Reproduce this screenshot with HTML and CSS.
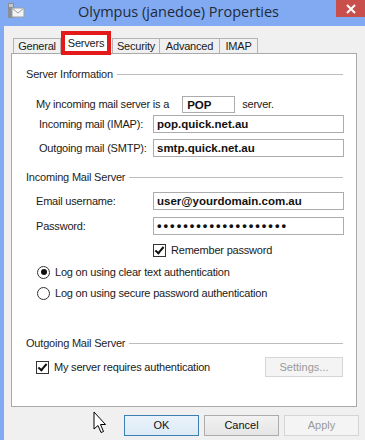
FILE: index.html
```html
<!DOCTYPE html>
<html lang="en">
<head>
    <meta charset="UTF-8">
    <title>Olympus (janedoe) Properties</title>
    <link rel="stylesheet" href="styles.css">
</head>
<body>

    <div class="window">
        <div class="titlebar">
            <svg class="app-icon" width="18" height="16" viewBox="0 0 18 16">
                <rect x="1" y="0" width="6" height="15" fill="#8a8f96"/>
                <rect x="2" y="1" width="4" height="3" fill="#c4c8cc"/>
                <rect x="5" y="5" width="12" height="9" fill="#f4f4f4" stroke="#9aa0a6"/>
                <path d="M5.5 5.5 L11 10 L16.5 5.5" fill="none" stroke="#9aa0a6"/>
            </svg>
            <div class="title">Olympus (janedoe) Properties</div>
            <div class="close">
                <svg width="10" height="10" viewBox="0 0 10 10">
                    <path d="M1 1 L9 9 M9 1 L1 9" stroke="white" stroke-width="2"/>
                </svg>
            </div>
        </div>

        <div class="client">
            <div class="tabs">
                <div class="tab tab-general">General</div>
                <div class="tab tab-servers active">Servers</div>
                <div class="tab tab-security">Security</div>
                <div class="tab tab-advanced">Advanced</div>
                <div class="tab tab-imap">IMAP</div>
            </div>

            <div class="panel">
                <div class="group-title first">
                    <span>Server Information</span>
                    <div class="rule"></div>
                </div>

                <div class="row row-pop">
                    <span class="label-inline">My incoming mail server is a</span>
                    <div class="box box-pop">POP</div>
                    <span>server.</span>
                </div>

                <div class="row row-imap">
                    <span class="label">Incoming mail (IMAP):</span>
                    <div class="box box-wide">pop.quick.net.au</div>
                </div>

                <div class="row row-smtp">
                    <span class="label">Outgoing mail (SMTP):</span>
                    <div class="box box-wide">smtp.quick.net.au</div>
                </div>

                <div class="group-title incoming">
                    <span>Incoming Mail Server</span>
                    <div class="rule"></div>
                </div>

                <div class="row row-email">
                    <span class="label label-short">Email username:</span>
                    <div class="box box-wide">user@yourdomain.com.au</div>
                </div>

                <div class="row row-password">
                    <span class="label label-short">Password:</span>
                    <div class="box box-wide dots">••••••••••••••••••••</div>
                </div>

                <div class="row row-remember">
                    <span class="check checked"></span>
                    <span>Remember password</span>
                </div>

                <div class="row row-radio1">
                    <span class="radio selected"></span>
                    <span>Log on using clear text authentication</span>
                </div>

                <div class="row row-radio2">
                    <span class="radio"></span>
                    <span>Log on using secure password authentication</span>
                </div>

                <div class="group-title outgoing">
                    <span>Outgoing Mail Server</span>
                    <div class="rule"></div>
                </div>

                <div class="row row-auth">
                    <span class="check checked"></span>
                    <span class="auth-text">My server requires authentication</span>
                    <div class="button disabled settings">Settings...</div>
                </div>
            </div>

            <div class="footer">
                <div class="button default">OK</div>
                <div class="button">Cancel</div>
                <div class="button disabled">Apply</div>
            </div>

            <svg class="cursor" width="14" height="23" viewBox="0 0 14 23">
                <path d="M1 1 L1 18 L5 14.5 L8 21.5 L10.5 20.5 L7.5 13.5 L12.5 13.5 Z" fill="white" stroke="black" stroke-width="1"/>
            </svg>
        </div>
    </div>

</body>
</html>
```

FILE: styles.css
```css
body {
    margin: 0;
    padding: 0;
    font-family: "Liberation Sans", Arial, sans-serif;
    font-size: 11px;
    letter-spacing: -0.2px;
    color: #1a1a1a;
}

.window {
    width: 365px;
    height: 440px;
    background: #82aaf2;
    display: flex;
    flex-direction: column;
    overflow: hidden;
}

.titlebar {
    height: 26px;
    display: flex;
    align-items: center;
}

.app-icon {
    margin-left: 7px;
    margin-top: -4px;
}

.title {
    flex: 1;
    text-align: center;
    font-family: "Open Sans", sans-serif;
    font-size: 14.5px;
    letter-spacing: 0;
    color: #1f2a38;
    margin-left: -4px;
    margin-top: -3px;
}

.close {
    width: 29px;
    height: 17px;
    align-self: flex-start;
    background: #c84f4b;
    display: flex;
    justify-content: center;
    align-items: center;
}

.client {
    flex: 1;
    margin-left: 4px;
    background: #f0f0f0;
    position: relative;
}

/* tabs */

.tabs {
    height: 27px;
    display: flex;
    align-items: flex-end;
    padding-left: 9px;
    position: relative;
    z-index: 2;
}

.tab {
    height: 14px;
    line-height: 14px;
    border: 1px solid #b4b4b4;
    border-bottom: none;
    background: #f0f0f0;
    text-align: center;
    margin-right: -1px;
}

.tab-general { width: 46px; }
.tab-security { width: 46px; }
.tab-advanced { width: 59px; }
.tab-imap { width: 37px; }

.tab.active {
    width: 42px;
    height: 16px;
    line-height: 16px;
    border: 4px solid #e41a1a;
    background: white;
    margin: 0 1px -2px 1px;
}

/* panel */

.panel {
    margin-left: 7px;
    width: 317px;
    height: 352px;
    border: 1px solid #a9a9a9;
    background: white;
    padding: 0 13px 0 14px;
    display: flex;
    flex-direction: column;
}

.group-title {
    height: 20px;
    display: flex;
    align-items: center;
    color: #1e1e1e;
}

.group-title span {
    margin-right: 4px;
}

.group-title .rule {
    flex: 1;
    height: 1px;
    background: #bcbcbc;
    margin-top: 1px;
}

.group-title.first { margin-top: 10px; }
.group-title.incoming { margin-top: 9px; }
.group-title.outgoing { margin-top: 30px; }

.row {
    height: 20px;
    display: flex;
    align-items: center;
    padding-left: 10px;
}

.row-pop { margin-top: 10px; }
.row-imap { margin-top: 0; }
.row-smtp { margin-top: 4px; }
.row-email { margin-top: 4px; }
.row-password { margin-top: 5px; }
.row-remember { margin-top: 4px; padding-left: 127px; }
.row-radio1 { margin-top: 2px; }
.row-radio2 { margin-top: 1px; }
.row-auth { margin-top: 4px; }

.label {
    flex: none;
    box-sizing: border-box;
    width: 117px;
    padding-left: 3px;
}

.label-short {
    padding-left: 0;
}

.label-inline {
    margin-right: 13px;
}

.box {
    flex: none;
    box-sizing: border-box;
    height: 18px;
    line-height: 16px;
    border: 1px solid #acacac;
    background: white;
    font-weight: bold;
    font-size: 11.5px;
    letter-spacing: 0;
    padding-left: 3px;
    color: #111;
}

.box-pop {
    width: 53px;
    height: 17px;
    padding-left: 4px;
    margin-right: 7px;
}

.box-wide {
    width: 191px;
}

.dots {
    font-size: 13px;
    letter-spacing: 2px;
    line-height: 15px;
}

.check {
    flex: none;
    width: 11px;
    height: 11px;
    border: 1px solid #333;
    background: white;
    margin-right: 5px;
    position: relative;
}

.check.checked::after {
    content: "";
    position: absolute;
    left: 3px;
    top: 0px;
    width: 3px;
    height: 7px;
    border: solid #111;
    border-width: 0 2px 2px 0;
    transform: rotate(40deg);
}

.radio {
    flex: none;
    width: 11px;
    height: 11px;
    border: 1px solid #333;
    border-radius: 50%;
    background: white;
    margin-right: 5px;
    margin-left: 1px;
    position: relative;
}

.radio.selected::after {
    content: "";
    position: absolute;
    left: 2.5px;
    top: 2.5px;
    width: 6px;
    height: 6px;
    border-radius: 50%;
    background: #111;
}

.auth-text {
    flex: 1;
}

/* buttons */

.button {
    width: 73px;
    height: 19px;
    line-height: 19px;
    border: 1px solid #acacac;
    background: linear-gradient(#f2f2f2, #e5e5e5);
    text-align: center;
    color: #111;
    letter-spacing: 0;
}

.button.default {
    border-color: #3c7fb1;
    background: linear-gradient(#eaf3fb, #dceaf6);
}

.button.disabled {
    color: #9a9a9a;
    border-color: #d5d5d5;
    background: #f4f4f4;
}

.settings {
    width: 76px;
    height: 18px;
    line-height: 18px;
}

.footer {
    display: flex;
    gap: 5px;
    padding-left: 120px;
    margin-top: 8px;
}

.cursor {
    position: absolute;
    left: 89px;
    top: 385px;
}
```
